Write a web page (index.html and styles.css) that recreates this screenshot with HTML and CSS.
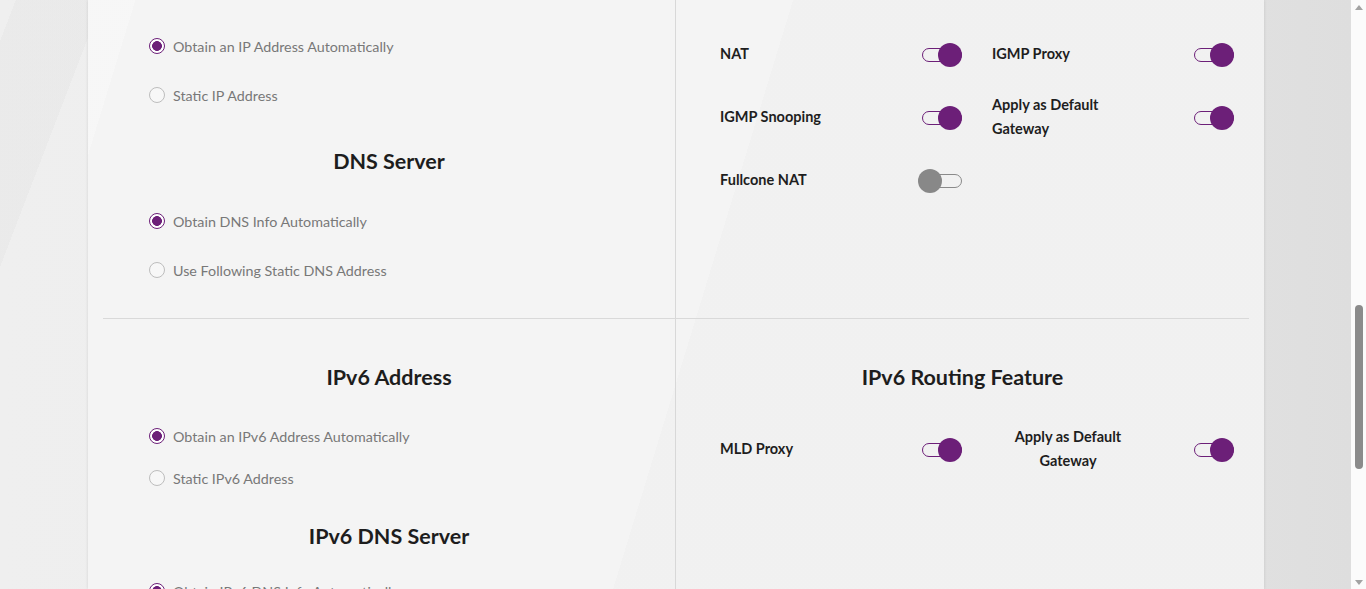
FILE: index.html
```html
<!DOCTYPE html>
<html lang="en">
<head>
<meta charset="utf-8">
<title>WAN Settings</title>
<link rel="stylesheet" href="styles.css">
</head>
<body>
<div class="viewport">
  <div class="card">
    <div class="section section-top">
      <div class="col col-left">
        <div class="stack stack-top">
          <label class="radio-row"><span class="radio checked"></span><span class="radio-label">Obtain an IP Address Automatically</span></label>
          <label class="radio-row gap-25"><span class="radio"></span><span class="radio-label">Static IP Address</span></label>
          <h2 class="heading gap-39">DNS Server</h2>
          <label class="radio-row gap-33"><span class="radio checked"></span><span class="radio-label">Obtain DNS Info Automatically</span></label>
          <label class="radio-row gap-25"><span class="radio"></span><span class="radio-label">Use Following Static DNS Address</span></label>
        </div>
      </div>
      <div class="col col-right">
        <div class="toggle-grid grid-top">
          <div class="toggle-cell"><span class="t-label">NAT</span><span class="toggle on"><span class="track"></span><span class="knob"></span></span></div>
          <div class="toggle-cell"><span class="t-label">IGMP Proxy</span><span class="toggle on"><span class="track"></span><span class="knob"></span></span></div>
          <div class="toggle-cell"><span class="t-label">IGMP Snooping</span><span class="toggle on"><span class="track"></span><span class="knob"></span></span></div>
          <div class="toggle-cell"><span class="t-label narrow">Apply as Default Gateway</span><span class="toggle on"><span class="track"></span><span class="knob"></span></span></div>
          <div class="toggle-cell"><span class="t-label">Fullcone NAT</span><span class="toggle off"><span class="track"></span><span class="knob"></span></span></div>
        </div>
      </div>
    </div>
    <div class="section section-bottom">
      <div class="col col-left">
        <div class="stack stack-bottom">
          <h2 class="heading">IPv6 Address</h2>
          <label class="radio-row gap-32"><span class="radio checked"></span><span class="radio-label">Obtain an IPv6 Address Automatically</span></label>
          <label class="radio-row gap-18"><span class="radio"></span><span class="radio-label">Static IPv6 Address</span></label>
          <h2 class="heading gap-31">IPv6 DNS Server</h2>
          <label class="radio-row gap-28"><span class="radio checked"></span><span class="radio-label">Obtain IPv6 DNS Info Automatically</span></label>
        </div>
      </div>
      <div class="col col-right">
        <div class="stack stack-bottom">
          <h2 class="heading">IPv6 Routing Feature</h2>
          <div class="toggle-grid grid-bottom">
            <div class="toggle-cell"><span class="t-label">MLD Proxy</span><span class="toggle on"><span class="track"></span><span class="knob"></span></span></div>
            <div class="toggle-cell"><span class="t-label narrow centered">Apply as Default Gateway</span><span class="toggle on"><span class="track"></span><span class="knob"></span></span></div>
          </div>
        </div>
      </div>
    </div>
  </div>
</div>
<div class="scrollbar">
  <span class="arrow up"></span>
  <div class="sb-track"><span class="thumb"></span></div>
  <span class="arrow down"></span>
</div>
</body>
</html>
```

FILE: styles.css
```css
* { box-sizing: border-box; }

html, body {
  margin: 0;
  height: 589px;
  overflow: hidden;
}

body {
  display: flex;
  font-family: Lato, "Noto Sans", sans-serif;
}

.viewport {
  flex: 1;
  padding: 0 87px 0 88px;
  background:
    linear-gradient(111deg, transparent 0 1%, rgba(0,0,0,0.02) 1% 6.5%, transparent 6.5%),
    linear-gradient(to right, #efefef 0%, #ececec 50%, #dedede 100%);
  overflow: hidden;
}

.card {
  height: 100%;
  padding: 0 15px;
  background:
    linear-gradient(107deg, rgba(255,255,255,0.25) 0 3.5%, transparent 3.5% 52%, rgba(0,0,0,0.012) 52% 100%),
    #f4f4f4;
  box-shadow: 0 0 3px rgba(0,0,0,0.12);
  display: flex;
  flex-direction: column;
  overflow: hidden;
}

.section {
  display: grid;
  grid-template-columns: 573px 573px;
}

.section-top {
  flex: none;
  height: 319px;
  border-bottom: 1px solid #d9d9d9;
}

.section-bottom {
  flex: 1;
  min-height: 0;
}

.col-left { border-right: 1px solid #d8d8d8; }

.stack {
  display: flex;
  flex-direction: column;
  align-items: stretch;
}

.stack-top { padding: 34px 0 0 46px; }
.stack-bottom { padding-top: 43px; }
.col-left .stack-bottom { padding-left: 46px; }

.radio-row {
  display: flex;
  align-items: center;
  gap: 8px;
  height: 24px;
  flex: none;
}

.radio {
  width: 16px;
  height: 16px;
  border-radius: 50%;
  border: 1px solid #bdbdbd;
  background: #f7f7f7;
  flex: none;
}

.radio.checked {
  border: 1.5px solid #6c1f78;
  background: radial-gradient(circle, #6c1f78 0 4.6px, #fff 5.2px);
}

.radio-label {
  font-size: 14.3px;
  font-weight: 400;
  color: #787878;
}

.heading {
  margin: 0;
  height: 30px;
  line-height: 30px;
  font-size: 21.5px;
  font-weight: 700;
  color: #1d1d1d;
  text-align: center;
  flex: none;
}

.col-left .heading { margin-left: -46px; }

.gap-18 { margin-top: 18px; }
.gap-25 { margin-top: 25px; }
.gap-28 { margin-top: 28px; }
.gap-31 { margin-top: 31px; }
.gap-32 { margin-top: 32px; }
.gap-33 { margin-top: 33px; }
.gap-39 { margin-top: 39px; }

.toggle-grid {
  display: grid;
  grid-template-columns: 242px 242px;
  column-gap: 30px;
  row-gap: 15px;
  padding-left: 44px;
}

.grid-top { padding-top: 31px; }
.grid-bottom { margin-top: 34px; }

.toggle-cell {
  display: flex;
  align-items: center;
  justify-content: space-between;
  height: 48px;
}

.t-label {
  font-size: 14.5px;
  font-weight: 700;
  color: #1e1e1e;
  line-height: 24px;
  margin-top: -2px;
}

.t-label.narrow { width: 152px; }
.t-label.centered { text-align: center; }

.toggle {
  position: relative;
  width: 42px;
  height: 24px;
  flex: none;
  margin-right: -1px;
}

.track {
  position: absolute;
  left: 1px;
  top: 5px;
  width: 40px;
  height: 14px;
  border-radius: 7px;
  border: 1.5px solid #6c1f78;
}

.knob {
  position: absolute;
  top: 0;
  width: 24px;
  height: 24px;
  border-radius: 50%;
  background: #6c1f78;
}

.toggle.on .knob { right: 1px; }

.toggle.off .track { border-color: #8a8a8a; border-width: 1px; }
.toggle.off .knob { left: -3px; background: #888888; }

.scrollbar {
  width: 15px;
  flex: none;
  background: #fbfbfb;
  display: flex;
  flex-direction: column;
  align-items: center;
  padding: 5px 0 4px;
}

.arrow {
  width: 0;
  height: 0;
  border-left: 4.5px solid transparent;
  border-right: 4.5px solid transparent;
  flex: none;
}

.arrow.up { border-bottom: 5px solid #a3a3a3; }
.arrow.down { border-top: 5px solid #a3a3a3; }

.sb-track {
  flex: 1;
  width: 100%;
  padding-top: 295px;
  display: flex;
  justify-content: center;
}

.thumb {
  width: 8px;
  height: 164px;
  border-radius: 4px;
  background: #8b8b8b;
}
```
